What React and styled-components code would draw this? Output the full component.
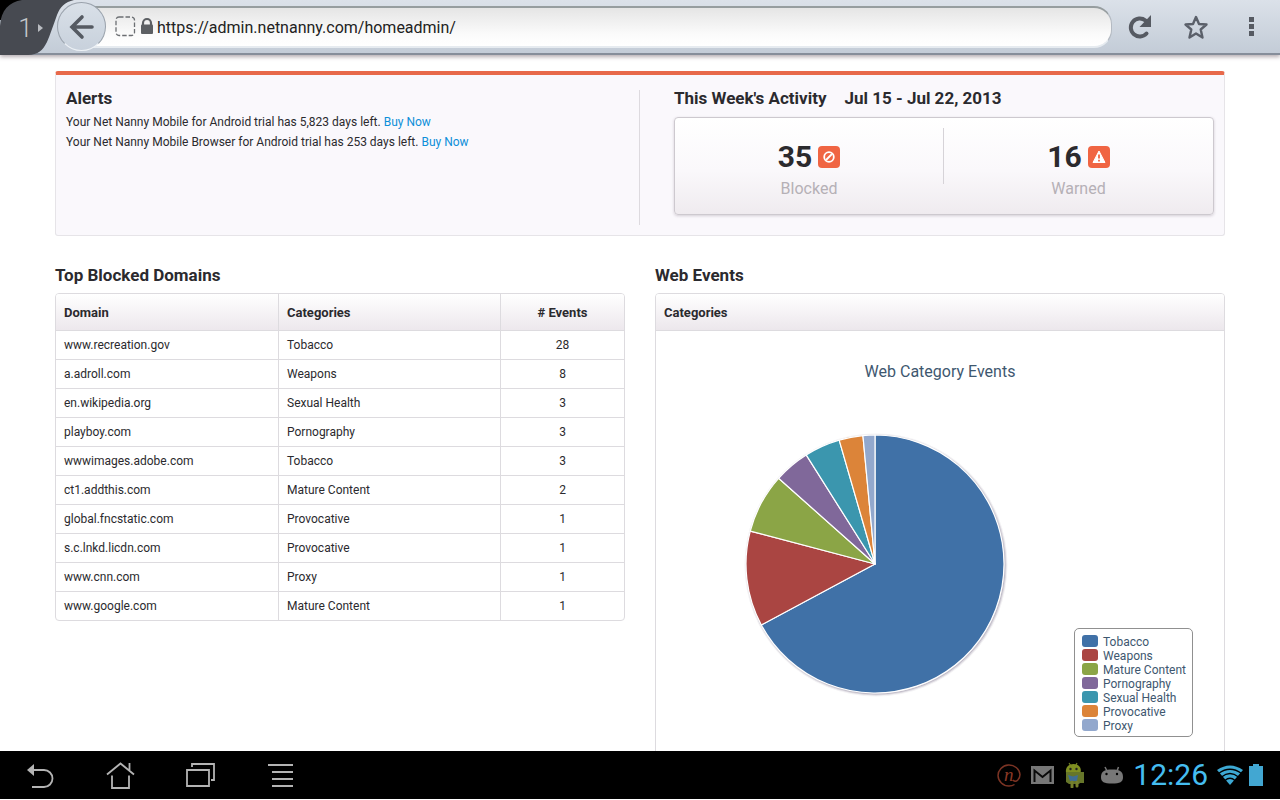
import React from "react";
import styled, { createGlobalStyle } from "styled-components";

const Global = createGlobalStyle`
  *, *::before, *::after { box-sizing: border-box; }
  body { margin: 0; background: #fff; }
  body, button, input, table { font-family: Roboto, "Liberation Sans", sans-serif; }
  h1, h2, p, ul { margin: 0; padding: 0; }
`;

const Screen = styled.div`
  display: flex;
  flex-direction: column;
  height: 100vh;
  padding-bottom: 1px;
  overflow: hidden;
  color: #2b2a2e;
`;

/* Browser chrome */
const BrowserBar = styled.header`
  position: relative;
  z-index: 2;
  display: flex;
  align-items: center;
  flex: none;
  height: 55px;
  background: linear-gradient(#dbe1e9, #c3ccd7);
  border-bottom: 2px solid #868e9a;
  box-shadow: 0 2px 4px rgba(70, 50, 60, 0.4);
`;

const PlainButton = styled.button`
  display: flex;
  align-items: center;
  justify-content: center;
  padding: 0;
  border: 0;
  background: none;
  cursor: pointer;
`;

const TabsButton = styled(PlainButton)`
  position: relative;
  align-self: flex-start;
  width: 57px;
  height: 55px;
  flex: none;
`;

const TabShape = styled.svg`
  position: absolute;
  top: 0;
  left: 0;
`;

const TabCount = styled.span`
  position: relative;
  display: flex;
  align-items: center;
  gap: 5px;
  padding-left: 4px;
  font-size: 26px;
  line-height: 28px;
  font-weight: 300;
  color: #c4c7cb;
`;

const BackButton = styled(PlainButton)`
  position: relative;
  z-index: 1;
  flex: none;
  width: 49px;
  height: 49px;
  border: 1px solid #99a1ab;
  border-bottom-color: #eef2f6;
  border-radius: 50%;
  background: linear-gradient(#d9e0e8, #c8d1dc);
`;

const AddressBar = styled.div`
  display: flex;
  align-items: center;
  flex: 1;
  min-width: 0;
  height: 42px;
  margin-left: -15px;
  padding-left: 23px;
  border: 1px solid #b4bac2;
  border-top: 2px solid #969d9f;
  border-bottom: 2px solid #e6ebf0;
  border-radius: 0 18px 18px 0;
  background: linear-gradient(#e5e5e5, #fbfbfb 70%, #fff);
`;

const AddressInput = styled.input`
  flex: 1;
  min-width: 0;
  padding: 2px 0 0;
  border: 0;
  outline: 0;
  background: none;
  font-size: 16px;
  line-height: 24px;
  color: #222;
`;

const ToolButton = styled(PlainButton)`
  flex: none;
  width: 56px;
  height: 48px;
`;

/* Page */
const Page = styled.main`
  flex: 1;
  min-height: 0;
  overflow: hidden;
  padding: 16px 20px 0;
`;

const Container = styled.div`
  max-width: 1170px;
  margin: 0 auto;
`;

const Summary = styled.section`
  display: grid;
  grid-template-columns: 1fr 1fr;
  padding: 15px 10px 10px;
  border: 1px solid #e6e4e8;
  border-top: 4px solid #e8694a;
  border-radius: 3px;
  background: #faf8fc;
`;

const Alerts = styled.div`
  min-height: 135px;
  border-right: 1px solid #dddadf;
`;

const Activity = styled.div`
  padding-left: 34px;
`;

const Heading = styled.h2`
  font-size: 17px;
  line-height: 16px;
  font-weight: 700;
  white-space: nowrap;
`;

const ActivityHeading = styled(Heading)`
  display: flex;
  gap: 18px;
  margin-bottom: 11px;
`;

const AlertList = styled.ul`
  margin-top: 6px;
  list-style: none;
  font-size: 12px;
  line-height: 20px;
`;

const BuyLink = styled.a`
  color: #0d8fd9;
  text-decoration: none;
`;

const StatCard = styled.div`
  display: grid;
  grid-template-columns: 1fr 1fr;
  height: 98px;
  padding: 10px 0;
  border: 1px solid #cdc9cf;
  border-radius: 4px;
  background: linear-gradient(#fff, #faf8fb 55%, #efebef);
  box-shadow: 0 1px 3px rgba(60, 40, 60, 0.2);
`;

const Stat = styled.div`
  display: flex;
  flex-direction: column;
  align-items: center;
  gap: 7px;
  padding-top: 14px;
  height: 56px;
  border-right: ${(p) => (p.$divided ? "1px solid #d6d3d8" : "0")};
`;

const StatValue = styled.div`
  display: flex;
  align-items: center;
  gap: 6px;
  font-size: 30px;
  line-height: 30px;
  font-weight: 700;
`;

const StatBadge = styled.span`
  display: flex;
  align-items: center;
  justify-content: center;
  width: 22px;
  height: 22px;
  border-radius: 4px;
  background: #f06543;
`;

const StatLabel = styled.span`
  font-size: 16px;
  line-height: 20px;
  color: #b5b0b6;
`;

const Columns = styled.div`
  display: grid;
  grid-template-columns: 1fr 1fr;
  gap: 30px;
  margin-top: 31px;
`;

const Panel = styled.div`
  margin-top: 10px;
  border: 1px solid #dddbdf;
  border-radius: 4px;
  overflow: hidden;
`;

const PanelHeader = styled.div`
  height: 37px;
  padding: 1px 8px 0;
  border-bottom: 1px solid #dddbdf;
  background: linear-gradient(#fff, #ece7ec);
  font-size: 13px;
  line-height: 36px;
  font-weight: 700;
`;

const DomainTable = styled.table`
  width: 100%;
  border-collapse: separate;
  border-spacing: 0;
  table-layout: fixed;
  font-size: 12px;
  line-height: 20px;

  thead tr { background: linear-gradient(#fff, #ece7ec); }
`;

const Cell = styled.td`
  height: 29px;
  padding: 0 8px;
  border-bottom: 1px solid #dddbdf;
  border-left: 1px solid #dddbdf;
  text-align: ${(p) => (p.$center ? "center" : "left")};

  &:first-child { border-left: 0; }
  tbody tr:last-child & {
    height: 28px;
    border-bottom: 0;
  }
`;

const HeadCell = styled(Cell)`
  width: ${(p) => p.$width || "auto"};
  height: 37px;
  padding-top: 2px;
  font-size: 13px;
  font-weight: 700;
`;

const Chart = styled.figure`
  margin: 0;
  padding: 31px 31px 60px 86px;
`;

const ChartTitle = styled.figcaption`
  margin-right: -31px;
  margin-left: -86px;
  text-align: center;
  font-size: 16px;
  line-height: 20px;
  color: #3e576f;
`;

const ChartBody = styled.div`
  display: flex;
  justify-content: space-between;
  align-items: flex-end;
  padding-top: 49px;
`;

const PieArt = styled.svg`
  flex: none;
  margin-bottom: 40px;
`;

const Legend = styled.ul`
  && { padding: 6px 6px 3px 7px; }
  border: 1px solid #909090;
  border-radius: 5px;
  list-style: none;
  font-size: 12px;
  line-height: 14px;
  color: #3e576f;
`;

const LegendItem = styled.li`
  display: flex;
  align-items: center;
  gap: 5px;
  height: 14px;

  &::before {
    content: "";
    width: 16px;
    height: 12px;
    margin-bottom: 2px;
    border-radius: 3px;
    background: ${(p) => p.$color};
  }
`;

/* System bar */
const SystemBar = styled.footer`
  display: flex;
  align-items: center;
  justify-content: space-between;
  flex: none;
  height: 48px;
  padding-right: 17px;
  background: #000;
`;

const NavGroup = styled.nav`
  display: flex;
`;

const NavButton = styled(PlainButton)`
  width: 80px;
  height: 48px;
`;

const StatusGroup = styled.div`
  display: flex;
  align-items: center;
  gap: 9px;
`;

const AppIcons = styled.div`
  display: flex;
  align-items: center;
  gap: 10px;
  margin-right: 6px;
`;

const Clock = styled.time`
  font-size: 30px;
  line-height: 50px;
  font-weight: 400;
  color: #45bdf0;
`;

const SignalIcons = styled.div`
  display: flex;
  align-items: center;
  gap: 6px;
`;

const domains = [
  ["www.recreation.gov", "Tobacco", 28],
  ["a.adroll.com", "Weapons", 8],
  ["en.wikipedia.org", "Sexual Health", 3],
  ["playboy.com", "Pornography", 3],
  ["wwwimages.adobe.com", "Tobacco", 3],
  ["ct1.addthis.com", "Mature Content", 2],
  ["global.fncstatic.com", "Provocative", 1],
  ["s.c.lnkd.licdn.com", "Provocative", 1],
  ["www.cnn.com", "Proxy", 1],
  ["www.google.com", "Mature Content", 1],
];

const events = [
  { name: "Tobacco", value: 45, color: "#4071a7" },
  { name: "Weapons", value: 8, color: "#aa4542" },
  { name: "Mature Content", value: 5, color: "#8ba546" },
  { name: "Pornography", value: 3, color: "#80689a" },
  { name: "Sexual Health", value: 3, color: "#3b96ae" },
  { name: "Provocative", value: 2, color: "#dc8439" },
  { name: "Proxy", value: 1, color: "#92a8cd" },
];

const CENTER = 133;
const RADIUS = 129;

function pieSlices(items) {
  const total = items.reduce((sum, item) => sum + item.value, 0);
  const point = (share) => {
    const angle = share * 2 * Math.PI;
    return [CENTER + RADIUS * Math.sin(angle), CENTER - RADIUS * Math.cos(angle)].join(" ");
  };
  let start = 0;
  return items.map((item) => {
    const end = start + item.value / total;
    const large = end - start > 0.5 ? 1 : 0;
    const d = `M${CENTER} ${CENTER}L${point(start)}A${RADIUS} ${RADIUS} 0 ${large} 1 ${point(end)}Z`;
    start = end;
    return { ...item, d };
  });
}

function Pie() {
  return (
    <PieArt width="266" height="266" viewBox="0 0 266 266" role="img" aria-label="Web events by category">
      <g fill="none" stroke="#2b1c40">
        <circle cx={CENTER + 1} cy={CENTER + 1} r={RADIUS} strokeWidth="5" opacity="0.05" />
        <circle cx={CENTER + 1} cy={CENTER + 1} r={RADIUS} strokeWidth="3" opacity="0.12" />
        <circle cx={CENTER + 1} cy={CENTER + 1} r={RADIUS} strokeWidth="1" opacity="0.15" />
      </g>
      {pieSlices(events).map((s) => (
        <path key={s.name} d={s.d} fill={s.color} stroke="#fff" strokeWidth="1.2" strokeLinejoin="round" />
      ))}
    </PieArt>
  );
}

function Browser() {
  return (
    <BrowserBar>
      <TabsButton aria-label="1 open tab">
        <TabShape width="76" height="55" viewBox="0 0 76 55" aria-hidden="true">
          <path d="M0 0H24V20H0Z" fill="#000" />
          <path d="M0 55V26C1 10 9 2 22 0H74C65 2 60 7 57 15C53 26 50 35 47 42C43 50 38 55 28 55Z" fill="#474a51" />
        </TabShape>
        <TabCount>
          1
          <svg width="5" height="8" viewBox="0 0 5 8" aria-hidden="true"><path d="M0 0L5 4L0 8Z" fill="#b9bcc1" /></svg>
        </TabCount>
      </TabsButton>
      <BackButton aria-label="Back">
        <svg width="26" height="26" viewBox="0 0 26 26" fill="none" stroke="#555a62" strokeWidth="3.6">
          <path d="M23 13H4M13 3L3 13L13 23" strokeLinecap="round" strokeLinejoin="miter" />
        </svg>
      </BackButton>
      <AddressBar>
        <svg width="42" height="24" viewBox="0 0 42 24" aria-hidden="true">
          <rect x="1" y="2" width="18.500" height="18.500" rx="3" fill="none" stroke="#6b6e72" strokeWidth="1.300" strokeDasharray="4.500 2" />
          <path d="M28 12V8A4 4 0 0 1 36 8V12" fill="none" stroke="#5c5f63" strokeWidth="2.200" />
          <rect x="26" y="9.500" width="12" height="9.500" rx="1" fill="#5c5f63" />
        </svg>
        <AddressInput aria-label="Address" type="text" defaultValue="https://admin.netnanny.com/homeadmin/" />
      </AddressBar>
      <ToolButton aria-label="Reload">
        <svg width="26" height="26" viewBox="0 0 26 26">
          <path d="M19.500 19.500A9 9 0 1 1 18.500 6.500" fill="none" stroke="#565a62" strokeWidth="4" strokeLinecap="round" />
          <path d="M24 1V13H12.500Z" fill="#565a62" />
        </svg>
      </ToolButton>
      <ToolButton aria-label="Bookmark">
        <svg width="26" height="26" viewBox="0 0 26 26">
          <path d="M13 3L16 10L23.500 10.500L17.700 15.500L19.500 23.500L13 19.500L6.500 23.500L8.300 15.500L2.500 10.500L10 10Z" fill="none" stroke="#5b606a" strokeWidth="2.400" strokeLinejoin="round" />
        </svg>
      </ToolButton>
      <ToolButton aria-label="Menu">
        <svg width="6" height="20" viewBox="0 0 6 20" fill="#565a62">
          <path d="M0 0H5V5H0ZM0 7H5V12H0ZM0 14H5V19H0Z" />
        </svg>
      </ToolButton>
    </BrowserBar>
  );
}

function SummaryPanel() {
  return (
    <Summary>
      <Alerts>
        <Heading>Alerts</Heading>
        <AlertList>
          <li>Your Net Nanny Mobile for Android trial has 5,823 days left. <BuyLink href="#buy-mobile">Buy Now</BuyLink></li>
          <li>Your Net Nanny Mobile Browser for Android trial has 253 days left. <BuyLink href="#buy-browser">Buy Now</BuyLink></li>
        </AlertList>
      </Alerts>
      <Activity>
        <ActivityHeading><span>This Week's Activity</span><span>Jul 15 - Jul 22, 2013</span></ActivityHeading>
        <StatCard>
          <Stat $divided>
            <StatValue>
              35
              <StatBadge>
                <svg width="12" height="12" viewBox="0 0 12 12" fill="none" stroke="#fff" strokeWidth="1.800">
                  <circle cx="6" cy="6" r="4.800" /><path d="M3 9L9 3" />
                </svg>
              </StatBadge>
            </StatValue>
            <StatLabel>Blocked</StatLabel>
          </Stat>
          <Stat>
            <StatValue>
              16
              <StatBadge>
                <svg width="14" height="14" viewBox="0 0 14 14">
                  <path d="M7 1L13 12.500H1Z" fill="#fff" stroke="#fff" strokeLinejoin="round" />
                  <path d="M7 4.500V8.500M7 9.800V11.500" stroke="#f06543" strokeWidth="1.800" />
                </svg>
              </StatBadge>
            </StatValue>
            <StatLabel>Warned</StatLabel>
          </Stat>
        </StatCard>
      </Activity>
    </Summary>
  );
}

function TopDomains() {
  return (
    <section>
      <Heading>Top Blocked Domains</Heading>
      <Panel>
        <DomainTable>
          <thead>
            <tr>
              <HeadCell as="th" scope="col">Domain</HeadCell>
              <HeadCell as="th" scope="col">Categories</HeadCell>
              <HeadCell as="th" scope="col" $width="124px" $center># Events</HeadCell>
            </tr>
          </thead>
          <tbody>
            {domains.map(([domain, category, count]) => (
              <tr key={domain}>
                <Cell>{domain}</Cell>
                <Cell>{category}</Cell>
                <Cell $center>{count}</Cell>
              </tr>
            ))}
          </tbody>
        </DomainTable>
      </Panel>
    </section>
  );
}

function WebEvents() {
  return (
    <section>
      <Heading>Web Events</Heading>
      <Panel>
        <PanelHeader>Categories</PanelHeader>
        <Chart>
          <ChartTitle>Web Category Events</ChartTitle>
          <ChartBody>
            <Pie />
            <Legend>
              {events.map((e) => <LegendItem key={e.name} $color={e.color}>{e.name}</LegendItem>)}
            </Legend>
          </ChartBody>
        </Chart>
      </Panel>
    </section>
  );
}

function System() {
  return (
    <SystemBar>
      <NavGroup aria-label="System">
        <NavButton aria-label="Back">
          <svg width="28" height="26" viewBox="0 0 28 26">
            <path d="M6 8H18A8.500 8.500 0 0 1 18 25H6" fill="none" stroke="#b4b4b4" strokeWidth="1.800" />
            <path d="M1 8L8 2V14Z" fill="#b4b4b4" />
          </svg>
        </NavButton>
        <NavButton aria-label="Home">
          <svg width="30" height="28" viewBox="0 0 30 28" fill="none" stroke="#b4b4b4" strokeWidth="1.800">
            <path d="M2 13.500L15.500 2.500L29 13.500M24.500 9V2M7 14.500V27H24V14.500" />
          </svg>
        </NavButton>
        <NavButton aria-label="Recent apps">
          <svg width="30" height="26" viewBox="0 0 30 26" fill="none" stroke="#b4b4b4" strokeWidth="1.800">
            <path d="M2 8H24V24H2ZM7 5V2H29V18H26" />
          </svg>
        </NavButton>
        <NavButton aria-label="Menu">
          <svg width="26" height="24" viewBox="0 0 26 24" stroke="#b4b4b4" strokeWidth="2">
            <path d="M1 2H26M5 9H26M5 16H26M5 23H26" />
          </svg>
        </NavButton>
      </NavGroup>
      <StatusGroup>
        <AppIcons>
          <svg width="24" height="24" viewBox="0 0 24 24" aria-label="Net Nanny">
            <path d="M16 17C19 20.500 23 16 23 11.500A11 10.500 0 1 0 12 23C14 23 16 22.500 17.500 21.500" fill="none" stroke="#7c3424" strokeWidth="1.500" />
            <text x="7" y="18" fontFamily="Liberation Serif, serif" fontStyle="italic" fontSize="19" fill="#8a3825">n</text>
          </svg>
          <svg width="24" height="18" viewBox="0 0 24 18" aria-label="Mail">
            <rect width="23" height="18" fill="#777" />
            <path d="M3.500 16V4.500L11.500 11L19.500 4.500V16" fill="none" stroke="#0a0a0a" strokeWidth="2" />
          </svg>
          <svg width="20" height="26" viewBox="0 0 20 26" aria-label="App">
            <path d="M4 1L6 4M12 1L10.500 4" stroke="#738224" strokeWidth="1.200" />
            <path d="M1 11C0 5 4 2 8.500 2S17 5 15.500 11Z" fill="#7f8f22" />
            <path d="M1 10H19V21H15L14 22H4L1 20Z" fill="#66762a" />
            <path d="M3 13L8 14.500L13 13L12 19H5Z" fill="#3e6d96" />
            <path d="M7 20V25M12 20V24" stroke="#75802c" strokeWidth="3" strokeLinecap="round" />
            <circle cx="5.500" cy="7" r="1.200" fill="#222" /><circle cx="11.500" cy="7" r="1.200" fill="#222" />
          </svg>
        </AppIcons>
        <svg width="24" height="20" viewBox="0 0 24 20" aria-label="Android">
          <path d="M1 12C1 6 5 4.500 12 4.500S23 6 23 12C23 17 20 18.500 12 18.500S1 17 1 12Z" fill="#777" />
          <path d="M5 2L7 6M18.500 2L17 6" stroke="#777" strokeWidth="1.500" />
          <circle cx="6.500" cy="9" r="1.200" fill="#000" /><circle cx="17" cy="9" r="1.200" fill="#000" />
        </svg>
        <Clock>12:26</Clock>
        <SignalIcons>
          <svg width="26" height="20" viewBox="0 0 26 20" aria-label="Wi-Fi">
            <path d="M0 5Q13 -4 26 5L13 20Z" fill="#3da9d4" />
            <path d="M1.500 8.500Q13 0 24.500 8.500M4.500 12Q13 5 21.500 12M8 15.500Q13 11 18 15.500" fill="none" stroke="#000" strokeWidth="1.300" />
          </svg>
          <svg width="14" height="22" viewBox="0 0 14 22" aria-label="Battery">
            <path d="M4 0H10V2H14V22H0V2H4Z" fill="#42a7d2" />
          </svg>
        </SignalIcons>
      </StatusGroup>
    </SystemBar>
  );
}

export default function App() {
  return (
    <Screen>
      <Global />
      <Browser />
      <Page>
        <Container>
          <SummaryPanel />
          <Columns>
            <TopDomains />
            <WebEvents />
          </Columns>
        </Container>
      </Page>
      <System />
    </Screen>
  );
}
